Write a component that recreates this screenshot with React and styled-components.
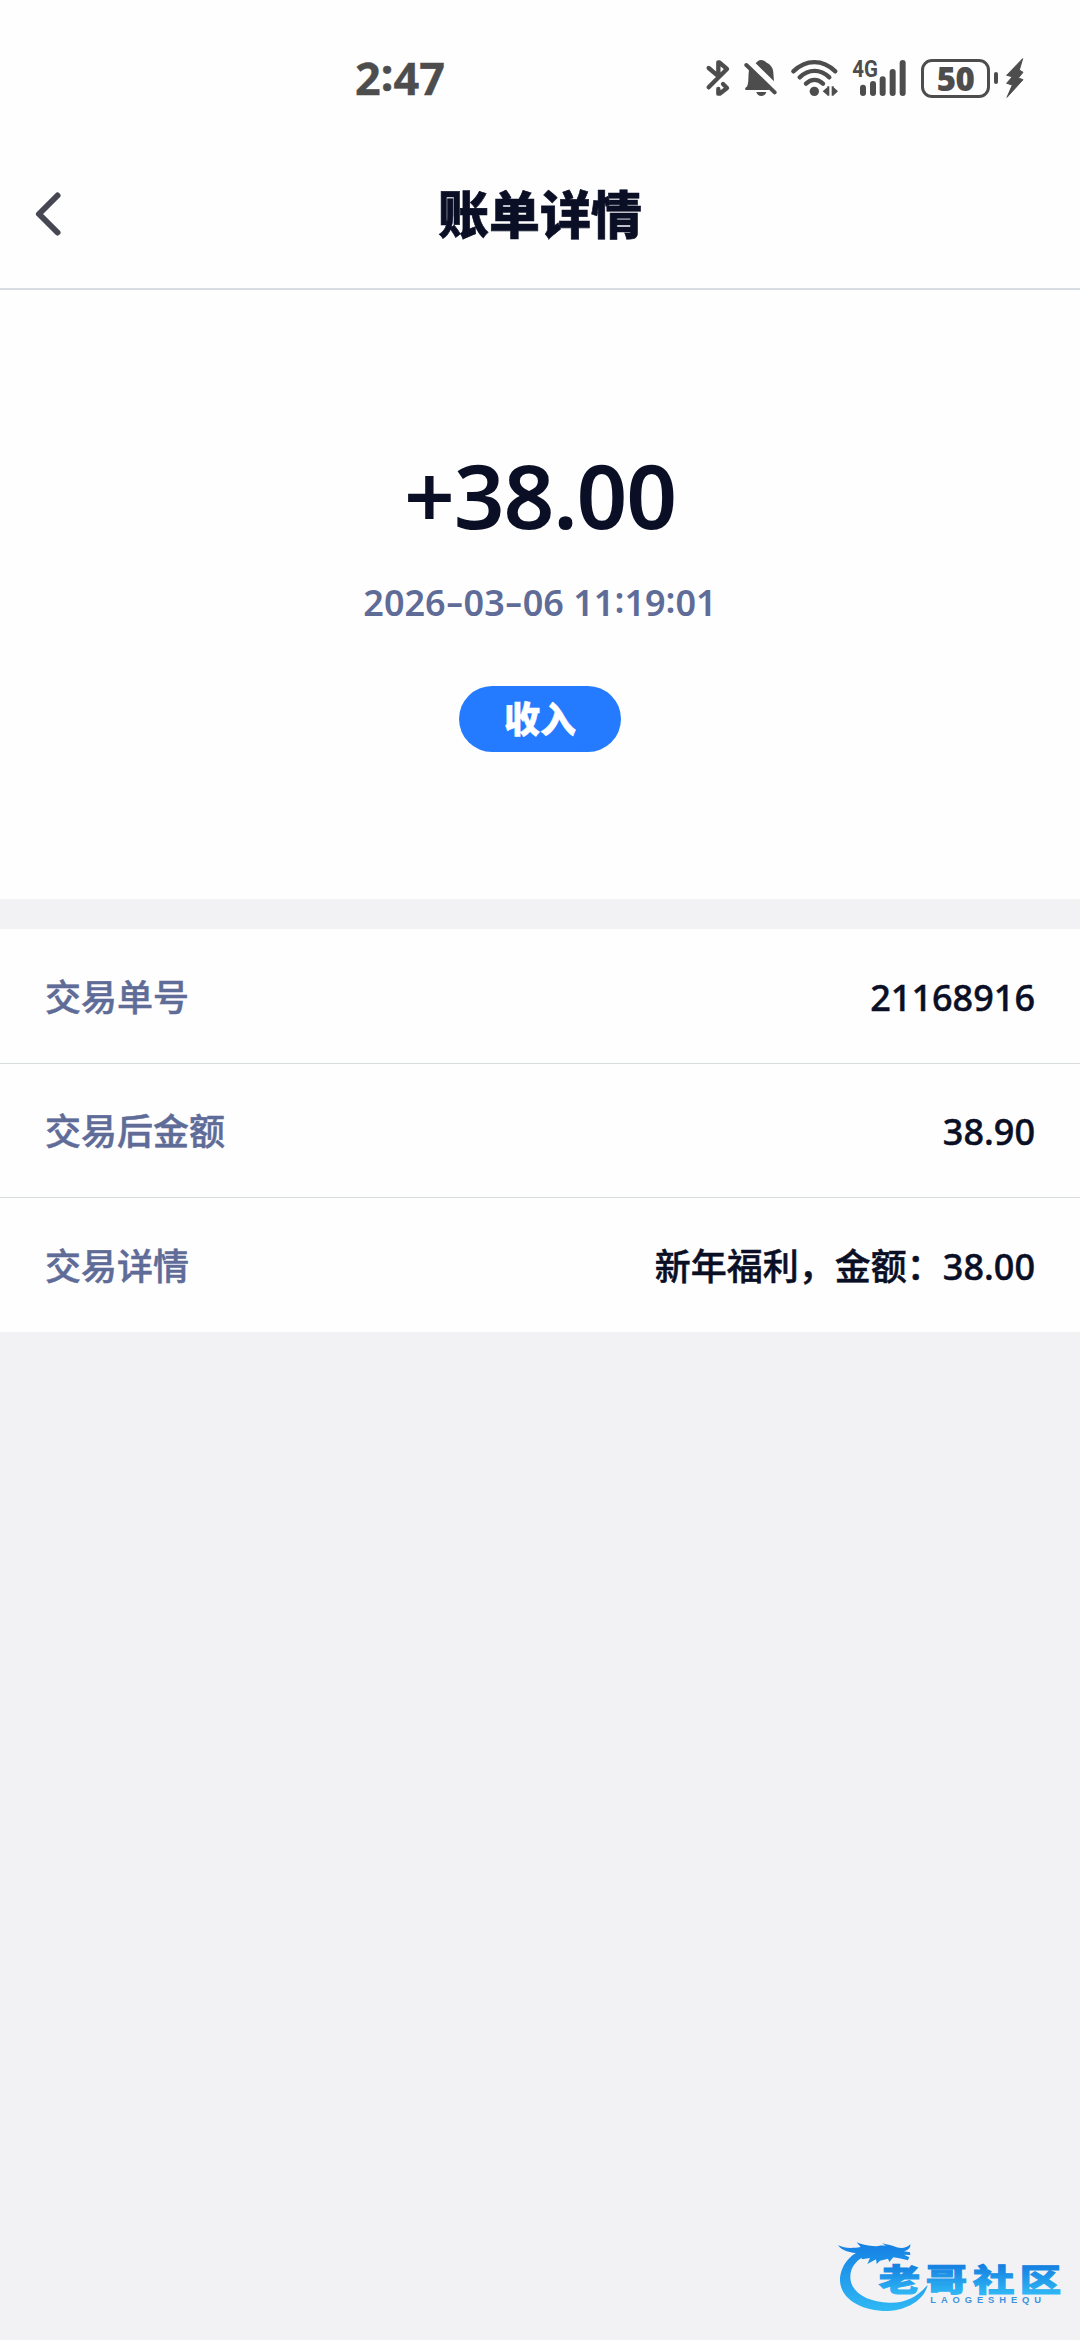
import React from "react";
import styled, { createGlobalStyle } from "styled-components";

const ink = "#0a0f26";
const muted = "#5f6c98";
const status = "#4d4d4d";

const Global = createGlobalStyle`
  * { box-sizing: border-box; }
  body { margin: 0; background: #f2f2f5; }
`;

const Page = styled.main`
  display: flex;
  flex-direction: column;
  width: 1080px;
  height: 2340px;
  background: #f2f2f5;
  color: ${ink};
  font-family: "Noto Sans", "Noto Sans CJK SC", sans-serif;
  font-size: 36px;
  font-weight: 500;
`;

const StatusBar = styled.div`
  display: flex;
  align-items: center;
  justify-content: space-between;
  height: 140px;
  padding: 16px 56px 0 355px;
  background: #fefefe;
  color: ${status};
`;

const Clock = styled.span`
  font-size: 45px;
  font-weight: 700;
  line-height: 40px;
  -webkit-text-stroke: 0.4px currentColor;
`;

const StatusIcons = styled.div`
  display: flex;
  align-items: center;
`;

const Glyph = styled.svg`
  display: block;
  width: ${(p) => p.$w}px;
  height: 40px;
  margin-right: ${(p) => p.$gap || 0}px;
  overflow: visible;
`;

const Battery = styled.div`
  display: flex;
  align-items: center;
  margin-right: 7px;
`;

const BatteryShell = styled.div`
  display: flex;
  align-items: center;
  justify-content: center;
  width: 69px;
  height: 39px;
  border: 3px solid ${status};
  border-radius: 11px;
  font-size: 33px;
  font-weight: 900;
  line-height: 33px;
  letter-spacing: -0.6px;
`;

const BatteryCap = styled.div`
  width: 4.5px;
  height: 12px;
  margin-left: 3.5px;
  border-radius: 2px;
  background: ${status};
`;

const NavBar = styled.header`
  display: grid;
  grid-template-columns: 100px 1fr 100px;
  align-items: center;
  height: 150px;
  border-bottom: 2px solid #d8dde3;
  background: #fefefe;
`;

const BackButton = styled.button`
  display: flex;
  align-items: center;
  padding: 0 0 0 32px;
  border: 0;
  background: none;
`;

const Title = styled.h1`
  margin: 0 0 4px;
  font-family: "Noto Sans CJK SC", sans-serif;
  font-size: 51px;
  font-weight: 900;
  line-height: 70px;
  text-align: center;
  -webkit-text-stroke: 0.6px currentColor;
`;

const Summary = styled.section`
  display: flex;
  flex-direction: column;
  align-items: center;
  height: 609px;
  padding-top: 145px;
  background: #fefefe;
`;

const Amount = styled.div`
  font-size: 89px;
  font-weight: 600;
  line-height: 120px;
  letter-spacing: -1.2px;
`;

const Time = styled.time`
  margin-top: 21px;
  color: ${muted};
  font-weight: 600;
  line-height: 54px;
`;

const Dash = styled.span`
  display: inline-block;
  margin: 0 3.2px;
  transform: translateY(-1px) scaleX(1.5);
`;

const Colon = styled.span`
  display: inline-block;
  transform: translateY(-0.08em);
`;

const Tag = styled.span`
  display: flex;
  align-items: center;
  justify-content: center;
  width: 162px;
  height: 66px;
  margin-top: 56px;
  padding-top: 2px;
  border-radius: 33px;
  background: #247bff;
  color: #fff;
  font-weight: 900;
  line-height: 50px;
  -webkit-text-stroke: 0.5px currentColor;
`;

const Details = styled.dl`
  display: flex;
  flex-direction: column;
  margin: 30px 0 0;
  background: #fefefe;
`;

const Row = styled.div`
  display: flex;
  align-items: center;
  justify-content: space-between;
  height: 134px;
  padding: 3px 45px 0;
  line-height: 50px;
  -webkit-text-stroke: 0.5px currentColor;

  & + & {
    border-top: 1px solid #d8dddf;
  }

  &:last-child {
    height: 135px;
  }
`;

const Label = styled.dt`
  color: ${muted};
`;

const Value = styled.dd`
  margin: 0;
`;

const Footer = styled.footer`
  display: flex;
  justify-content: flex-end;
  margin-top: auto;
`;

const Logo = styled.svg`
  display: block;
  width: 260px;
  height: 120px;
`;

const rows = [
  ["交易单号", "21168916"],
  ["交易后金额", "38.90"],
  ["交易详情", "新年福利，金额：38.00"],
];

const renderTime = (text) =>
  [...text].map((c, i) => {
    if (c === "-") return <Dash key={i}>-</Dash>;
    if (c === ":") return <Colon key={i}>:</Colon>;
    return c;
  });

const BluetoothIcon = () => (
  <Glyph $w={24} $gap={14} viewBox="48 54 72 120" fill="none" stroke={status} strokeWidth="13" strokeLinecap="round" strokeLinejoin="round">
    <path d="M56 84 L82 106 M56 142 L111 87 L88 67 L85 67 V106" />
    <path d="M85 147 V161 H89 L111 144 L99 132" />
  </Glyph>
);

const MutedBellIcon = () => (
  <Glyph $w={34} $gap={13} viewBox="162 54 102 120" fill={status}>
    <path d="M197 70 C201 66 205 60 213 60 C221 60 225 65 230 68 C243 74 250 86 250 98 L252 124 Z" />
    <path d="M178 84 L240 143 L236 150 H169 C164 150 164 142 170 141 C178 130 173 108 178 84 Z" />
    <path d="M199 156 H229 C227 164 221 168 214 168 C207 168 201 164 199 156 Z" />
    <path d="M169 75 L254 157" stroke={status} strokeWidth="12" strokeLinecap="round" />
  </Glyph>
);

const WifiIcon = () => (
  <Glyph $w={48} $gap={13} viewBox="303 54 144 120" fill={status}>
    <g fill="none" stroke={status} strokeWidth="13" strokeLinecap="round">
      <path d="M310 94 C348 57 398 57 436 94" />
      <path d="M329 112 C356 86 391 86 418 112" />
      <path d="M348 131 C364 116 383 116 399 131" />
    </g>
    <circle cx="373" cy="154" r="14" />
    <path d="M398 154 L412 142 V139 H418 V167 H412 V166 Z" />
    <path d="M444 154 L431 142 V139 H425 V167 H431 V166 Z" />
  </Glyph>
);

const SignalIcon = () => (
  <Glyph $w={55} $gap={14} viewBox="36 54 165 120" fill={status}>
    <text x="37" y="112" fontFamily="Roboto, sans-serif" fontSize="70" fontWeight="700" textLength="77" lengthAdjust="spacingAndGlyphs">4G</text>
    <rect x="60" y="134" width="18" height="34" rx="9" />
    <rect x="90" y="123" width="18" height="45" rx="9" />
    <rect x="119" y="109" width="18" height="59" rx="9" />
    <rect x="149" y="87" width="18" height="81" rx="9" />
    <rect x="179" y="60" width="18" height="108" rx="9" />
  </Glyph>
);

const BoltIcon = () => (
  <Glyph $w={19} viewBox="495 54 57 120" fill={status}>
    <path d="M548 56 L500 106 L517 110 L500 130 L517 135 L501 172 L549 119 L535 114 L549 97 L538 90 Z" stroke={status} strokeWidth="3" strokeLinejoin="round" />
  </Glyph>
);

const Watermark = () => (
  <Logo viewBox="0 0 780 360" role="img" aria-label="老哥社区">
    <defs>
      <linearGradient id="ring" x1="0" y1="70" x2="0" y2="272" gradientUnits="userSpaceOnUse">
        <stop offset="0" stopColor="#1580e4" />
        <stop offset="1" stopColor="#2fb8f4" />
      </linearGradient>
      <linearGradient id="word" x1="0" y1="-78" x2="0" y2="9" gradientUnits="userSpaceOnUse">
        <stop offset="0" stopColor="#147fe0" />
        <stop offset="1" stopColor="#2fb6f5" />
      </linearGradient>
    </defs>
    <g fill="url(#ring)">
      <path d="M140 84 C88 100 60 140 60 182 C62 238 126 274 204 273 C264 270 314 238 323 194 C292 232 254 250 208 248 C142 246 92 218 91 172 C91 140 110 116 150 102 Z" />
      <path d="M54 76 C72 84 92 86 122 81 L110 67 C126 74 140 76 158 78 C172 80 180 74 198 77 L186 70 C204 74 216 76 230 82 C246 86 260 84 271 73 C272 84 264 91 252 94 L270 97 L271 105 L252 104 L268 112 L264 121 L238 115 L220 112 L208 126 L204 116 L180 122 L170 132 L168 118 L142 132 L150 114 L126 118 L118 100 C92 100 64 92 54 76 Z" />
    </g>
    <g fill="url(#word)" stroke="url(#word)" strokeWidth="3" fontFamily="'Noto Sans CJK SC', sans-serif" fontWeight="900" fontSize="92">
      {["老", "哥", "社", "区"].map((c, i) => (
        <text key={c} transform={`translate(${[176, 317, 459, 599][i]} 212) scale(1.35 1)`}>{c}</text>
      ))}
    </g>
    <text x="331" y="250" fill="#3f93dc" fontFamily="'Liberation Sans', sans-serif" fontWeight="700" fontSize="28" textLength="332" lengthAdjust="spacing">LAOGESHEQU</text>
  </Logo>
);

export default function App() {
  return (
    <Page>
      <Global />
      <StatusBar>
        <Clock>{renderTime("2:47")}</Clock>
        <StatusIcons>
          <BluetoothIcon />
          <MutedBellIcon />
          <WifiIcon />
          <SignalIcon />
          <Battery>
            <BatteryShell>50</BatteryShell>
            <BatteryCap />
          </Battery>
          <BoltIcon />
        </StatusIcons>
      </StatusBar>
      <NavBar>
        <BackButton aria-label="返回">
          <svg width="32" height="48" viewBox="0 0 32 48" fill="none" stroke="#474753" strokeWidth="6" strokeLinecap="round" strokeLinejoin="round">
            <path d="M25.5 5.5 L7 24 L25.5 42.5" />
          </svg>
        </BackButton>
        <Title>账单详情</Title>
      </NavBar>
      <Summary>
        <Amount>+38.00</Amount>
        <Time>{renderTime("2026-03-06 11:19:01")}</Time>
        <Tag>收入</Tag>
      </Summary>
      <Details>
        {rows.map(([label, value]) => (
          <Row key={label}>
            <Label>{label}</Label>
            <Value>{value}</Value>
          </Row>
        ))}
      </Details>
      <Footer>
        <Watermark />
      </Footer>
    </Page>
  );
}
